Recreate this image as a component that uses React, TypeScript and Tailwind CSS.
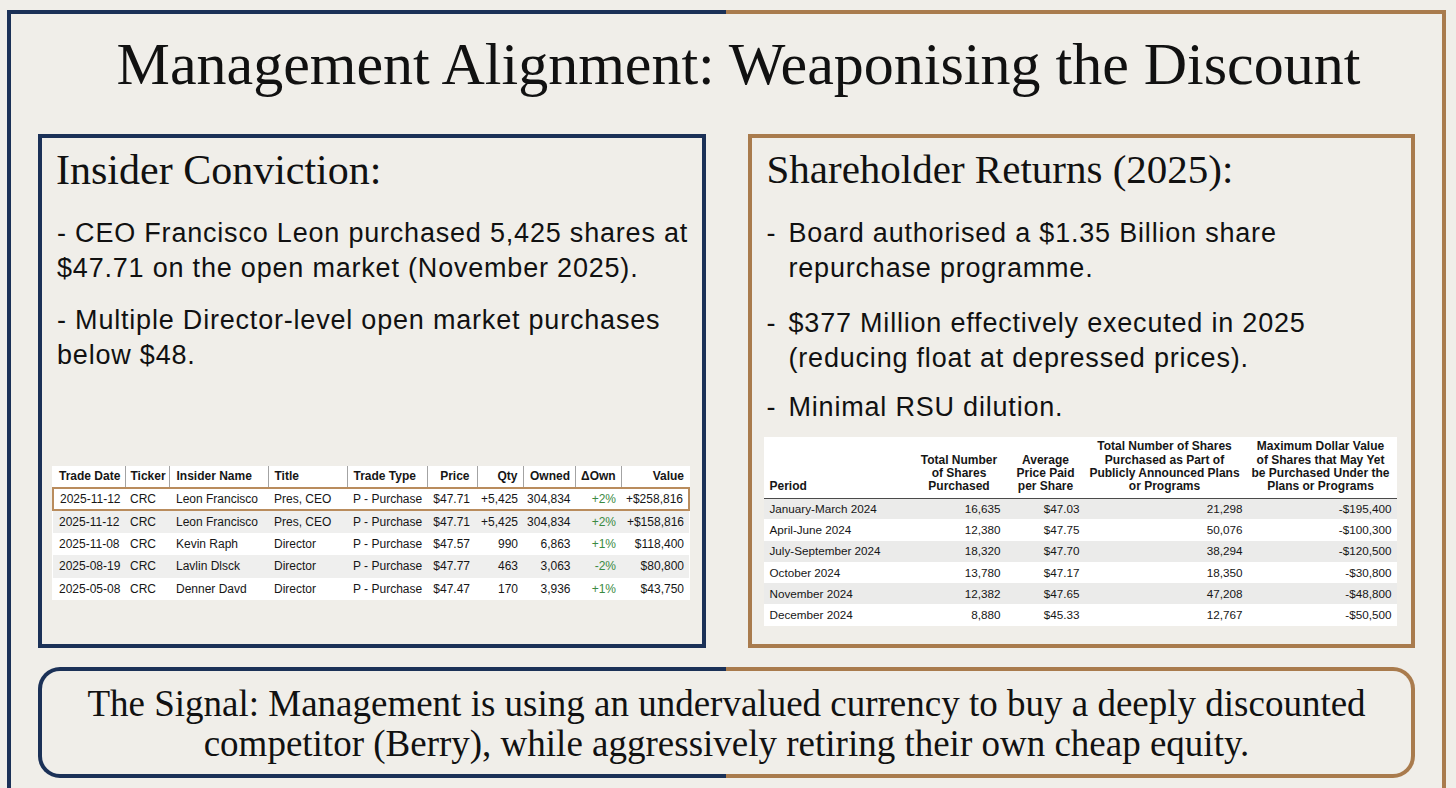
import React from 'react';

const serif = "font-['Liberation_Serif','Times_New_Roman',serif]";
const sans = "font-['Liberation_Sans',Arial,sans-serif]";

const trades = [
    { date: '2025-11-12', ticker: 'CRC', name: 'Leon Francisco', title: 'Pres, CEO', type: 'P - Purchase', price: '$47.71', qty: '+5,425', owned: '304,834', own: '+2%', value: '+$258,816', hl: true },
    { date: '2025-11-12', ticker: 'CRC', name: 'Leon Francisco', title: 'Pres, CEO', type: 'P - Purchase', price: '$47.71', qty: '+5,425', owned: '304,834', own: '+2%', value: '+$158,816' },
    { date: '2025-11-08', ticker: 'CRC', name: 'Kevin Raph', title: 'Director', type: 'P - Purchase', price: '$47.57', qty: '990', owned: '6,863', own: '+1%', value: '$118,400' },
    { date: '2025-08-19', ticker: 'CRC', name: 'Lavlin Dlsck', title: 'Director', type: 'P - Purchase', price: '$47.77', qty: '463', owned: '3,063', own: '-2%', value: '$80,800' },
    { date: '2025-05-08', ticker: 'CRC', name: 'Denner Davd', title: 'Director', type: 'P - Purchase', price: '$47.47', qty: '170', owned: '3,936', own: '+1%', value: '$43,750' },
];

const buybacks = [
    ['January-March 2024', '16,635', '$47.03', '21,298', '-$195,400'],
    ['April-June 2024', '12,380', '$47.75', '50,076', '-$100,300'],
    ['July-September 2024', '18,320', '$47.70', '38,294', '-$120,500'],
    ['October 2024', '13,780', '$47.17', '18,350', '-$30,800'],
    ['November 2024', '12,382', '$47.65', '47,208', '-$48,800'],
    ['December 2024', '8,880', '$45.33', '12,767', '-$50,500'],
];

function InsiderTable() {
    const th = 'h-[21.5px] px-[5px] font-bold border-r border-[#a3a3a3] whitespace-nowrap';
    return (
        <table className={`ml-[10px] w-[636px] table-fixed border-collapse bg-white text-[12px] text-[#161616] ${sans}`}>
            <colgroup>
                <col className="w-[72px]" />
                <col className="w-[44px]" />
                <col className="w-[99px]" />
                <col className="w-[79px]" />
                <col className="w-[80px]" />
                <col className="w-[50px]" />
                <col className="w-[46px]" />
                <col className="w-[52.5px]" />
                <col className="w-[45.5px]" />
                <col className="w-[68px]" />
            </colgroup>
            <thead>
                <tr>
                    <th className={`${th} text-left pl-[6px]`}>Trade Date</th>
                    <th className={`${th} text-left`}>Ticker</th>
                    <th className={`${th} text-left pl-[7px]`}>Insider Name</th>
                    <th className={`${th} text-left pl-[6px]`}>Title</th>
                    <th className={`${th} text-left pl-[6px]`}>Trade Type</th>
                    <th className={`${th} text-right pr-[7px]`}>Price</th>
                    <th className={`${th} text-right`}>Qty</th>
                    <th className={`${th} text-right`}>Owned</th>
                    <th className={`${th} text-right`}>ΔOwn</th>
                    <th className="h-[21.5px] px-[5px] font-bold text-right">Value</th>
                </tr>
            </thead>
            <tbody>
                {trades.map((t, i) => (
                    <tr
                        key={i}
                        className={`h-[22.5px] whitespace-nowrap ${t.hl ? 'border-2 border-[#b98c5d]' : ''} ${i % 2 === 1 ? 'bg-[#efefee]' : 'bg-white'}`}
                    >
                        <td className="pl-[6px]">{t.date}</td>
                        <td className="px-[5px]">{t.ticker}</td>
                        <td className="pl-[7px]">{t.name}</td>
                        <td className="pl-[6px]">{t.title}</td>
                        <td className="pl-[6px]">{t.type}</td>
                        <td className="text-right pr-[7px]">{t.price}</td>
                        <td className="text-right pr-[5px]">{t.qty}</td>
                        <td className="text-right pr-[5px]">{t.owned}</td>
                        <td className="text-right pr-[5px] text-[#3b8a42]">{t.own}</td>
                        <td className="text-right pr-[5px]">{t.value}</td>
                    </tr>
                ))}
            </tbody>
        </table>
    );
}

function BuybackTable() {
    return (
        <table className={`ml-[12px] w-[633px] table-fixed border-collapse bg-white text-[11.7px] text-[#161616] ${sans}`}>
            <colgroup>
                <col className="w-[148px]" />
                <col className="w-[95px]" />
                <col className="w-[78px]" />
                <col className="w-[160px]" />
                <col className="w-[152px]" />
            </colgroup>
            <thead>
                <tr className="h-[61px] border-b-[1.5px] border-[#4a4a4a] align-bottom text-[12px] font-bold leading-[13.3px]">
                    <th className="pl-[6px] pb-[4px] text-left">Period</th>
                    <th className="pb-[4px] text-center">Total Number<br />of Shares<br />Purchased</th>
                    <th className="pb-[4px] text-center">Average<br />Price Paid<br />per Share</th>
                    <th className="pb-[4px] text-center">Total Number of Shares<br />Purchased as Part of<br />Publicly Announced Plans<br />or Programs</th>
                    <th className="pb-[4px] text-center">Maximum Dollar Value<br />of Shares that May Yet<br />be Purchased Under the<br />Plans or Programs</th>
                </tr>
            </thead>
            <tbody>
                {buybacks.map((r, i) => (
                    <tr key={i} className={`h-[21.3px] whitespace-nowrap ${i % 2 === 0 ? 'bg-[#ebebea]' : 'bg-white'}`}>
                        <td className="pl-[6px]">{r[0]}</td>
                        <td className="text-right pr-[6px]">{r[1]}</td>
                        <td className="text-right pr-[5px]">{r[2]}</td>
                        <td className="text-right pr-[2px]">{r[3]}</td>
                        <td className="text-right pr-[5px]">{r[4]}</td>
                    </tr>
                ))}
            </tbody>
        </table>
    );
}

export default function App() {
    const bullet = `text-[27px] leading-[35px] tracking-[0.8px] text-[#111] ${sans}`;

    return (
        <div className="h-[788px] w-[1456px] overflow-hidden bg-[#f0eee9]">
            {/* outer frame: navy left half, bronze right half, open at the bottom */}
            <div className="ml-[7px] mt-[10px] w-[1439px] bg-[linear-gradient(90deg,#1b3157_50%,#a97b4d_50%)] px-[4px] pt-[4px]">
                <div className="h-[800px] bg-[#f0eee9] px-[27px]">
                    <h1 className={`h-[120px] pl-[24px] pt-[20px] text-center text-[60px] leading-none font-normal text-[#111] ${serif}`}>
                        Management Alignment: Weaponising the Discount
                    </h1>

                    <div className="grid grid-cols-2 gap-[42px]">
                        <div className="h-[514px] border-4 border-[#1b3157]">
                            <h2 className={`pl-[14px] pt-[11px] text-[42px] leading-none text-[#111] ${serif}`}>Insider Conviction:</h2>
                            <div className="mt-[25px] pl-[15px]">
                                <p className={bullet}>
                                    - CEO Francisco Leon purchased 5,425 shares at<br />
                                    $47.71 on the open market (November 2025).
                                </p>
                                <p className={`${bullet} mt-[17px]`}>
                                    - Multiple Director-level open market purchases<br />
                                    below $48.
                                </p>
                            </div>
                            <div className="mt-[93px]">
                                <InsiderTable />
                            </div>
                        </div>

                        <div className="h-[514px] border-4 border-[#a97b4d]">
                            <h2 className={`pl-[15px] pt-[11px] text-[41px] leading-none text-[#111] ${serif}`}>Shareholder Returns (2025):</h2>
                            <div className="mt-[26px] pl-[15px]">
                                <div className={`${bullet} flex`}>
                                    <span className="w-[22px] shrink-0">-</span>
                                    <span>Board authorised a $1.35 Billion share<br />repurchase programme.</span>
                                </div>
                                <div className={`${bullet} mt-[20px] flex`}>
                                    <span className="w-[22px] shrink-0">-</span>
                                    <span>$377 Million effectively executed in 2025<br />(reducing float at depressed prices).</span>
                                </div>
                                <div className={`${bullet} mt-[14px] flex`}>
                                    <span className="w-[22px] shrink-0">-</span>
                                    <span>Minimal RSU dilution.</span>
                                </div>
                            </div>
                            <div className="mt-[12px]">
                                <BuybackTable />
                            </div>
                        </div>
                    </div>

                    <div className="mt-[19px] rounded-[22px] bg-[linear-gradient(90deg,#1b3157_50%,#a97b4d_50%)] p-[4px]">
                        <div className={`flex h-[103px] items-center justify-center rounded-[18px] bg-[#f0eee9] pt-[3px] text-center text-[37px] leading-[40px] text-[#111] ${serif}`}>
                            <p>
                                The Signal: Management is using an undervalued currency to buy a deeply discounted<br />
                                competitor (Berry), while aggressively retiring their own cheap equity.
                            </p>
                        </div>
                    </div>
                </div>
            </div>
        </div>
    );
}
